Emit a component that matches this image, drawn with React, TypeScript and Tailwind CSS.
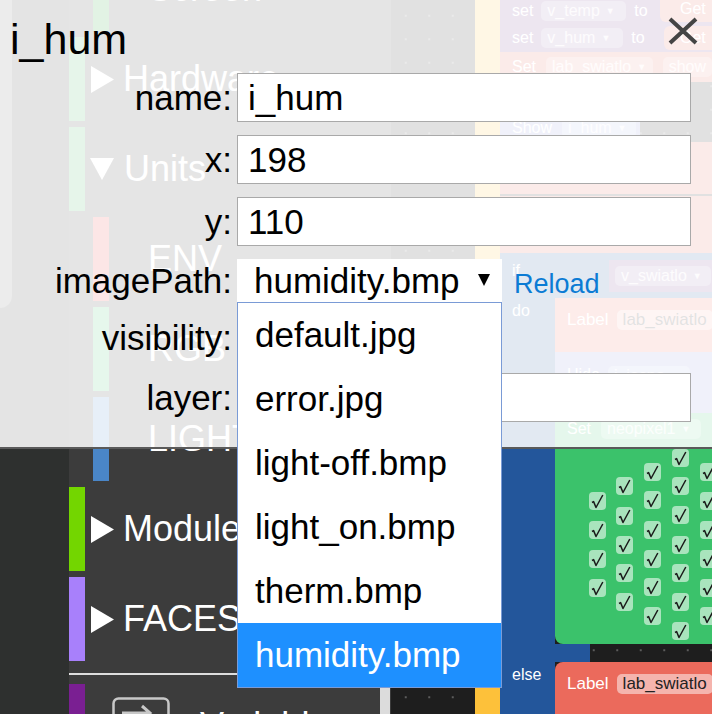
import React from "react";

type RowProps = { label: string; bar: string; dir?: "right" | "down" };

function TriRight() {
  return (
    <svg width="23" height="27" viewBox="0 0 23 27" className="shrink-0">
      <polygon points="0,0 23,13.5 0,27" fill="#ffffff" />
    </svg>
  );
}

function TriDown() {
  return (
    <svg width="24" height="22" viewBox="0 0 24 22" className="shrink-0">
      <polygon points="0,0 24,0 12,22" fill="#ffffff" />
    </svg>
  );
}

function MainRow({ label, bar, dir }: RowProps) {
  return (
    <div className="flex h-[84px] shrink-0 items-center">
      <div className={`h-full w-[16px] shrink-0 ${bar}`} />
      {dir === "down" ? (
        <div className="ml-[5px] flex items-center gap-[10px]">
          <TriDown />
          <span className="whitespace-nowrap text-[36px] leading-[40px] text-white">{label}</span>
        </div>
      ) : (
        <div className="ml-[6px] flex items-center gap-[9px]">
          <TriRight />
          <span className="whitespace-nowrap text-[36px] leading-[40px] text-white">{label}</span>
        </div>
      )}
    </div>
  );
}

function SubRow({ label, bar }: RowProps) {
  return (
    <div className="flex h-[84px] shrink-0 items-center">
      <div className={`ml-[24px] h-full w-[16px] shrink-0 ${bar}`} />
      <span className="ml-[39px] whitespace-nowrap text-[36px] leading-[40px] text-white">{label}</span>
    </div>
  );
}

function Toolbox() {
  return (
    <div className="relative flex h-full w-[322px] shrink-0 flex-col overflow-hidden bg-[#3c3c3c]">
      <div className="mt-[-53px] flex flex-col gap-[6px]">
        <SubRow label="Screen" bar="bg-[#1fa030]" />
        <MainRow label="Hardware" bar="bg-[#3eb15c]" dir="right" />
        <MainRow label="Units" bar="bg-[#3eb15c]" dir="down" />
        <SubRow label="ENV" bar="bg-[#e94040]" />
        <SubRow label="RGB" bar="bg-[#40bf6b]" />
        <SubRow label="LIGHT" bar="bg-[#4a86c8]" />
        <MainRow label="Modules" bar="bg-[#73d600]" dir="right" />
        <MainRow label="FACES" bar="bg-[#a880fb]" dir="right" />
      </div>
      <div className="mt-[12px] h-[2px] w-full shrink-0 bg-[#dedede]" />
      <div className="mt-[9px] flex h-[84px] shrink-0 items-center">
        <div className="h-full w-[16px] shrink-0 bg-[#7a1f92]" />
        <svg width="58" height="58" viewBox="0 0 58 58" className="ml-[27px] shrink-0">
          <rect x="1.5" y="1.5" width="55" height="55" rx="5" fill="none" stroke="#c8c8c8" strokeWidth="2.5" />
          <path d="M10 16 L38 16 M30 9 L38 16 L30 23" fill="none" stroke="#c8c8c8" strokeWidth="3" />
          <path d="M48 30 L20 30 M28 23 L20 30 L28 37" fill="none" stroke="#c8c8c8" strokeWidth="3" />
        </svg>
        <span className="ml-[30px] whitespace-nowrap text-[36px] leading-[40px] text-white">Variables</span>
      </div>
      <div className="absolute left-[311px] top-[688px] h-[30px] w-[10px] bg-[#dcdcdc]" />
    </div>
  );
}

function Pill({ text, arrow = true, className = "" }: { text: string; arrow?: boolean; className?: string }) {
  return (
    <div className={`flex h-[20px] items-center gap-[6px] rounded-[5px] bg-white/30 px-[6px] text-[16px] leading-[18px] text-white/80 ${className}`}>
      <span className="whitespace-nowrap">{text}</span>
      {arrow && <span className="text-[9px] leading-none">▼</span>}
    </div>
  );
}

const checks: [number, number][] = [
  [34, 79], [34, 108], [34, 137], [34, 166],
  [61, 64], [61, 94], [61, 123], [61, 151], [61, 180],
  [89, 50], [89, 78], [89, 108], [89, 137], [89, 165], [89, 194],
  [117, 36], [117, 64], [117, 93], [117, 123], [117, 151], [117, 180], [117, 209],
  [145, 50], [145, 79], [145, 108], [145, 137], [145, 166], [145, 194],
];

function Workspace() {
  return (
    <div className="relative h-full flex-1 overflow-hidden bg-[#1e1e1e] bg-[radial-gradient(circle,#5c5c5c_1px,transparent_1.5px)] bg-[length:23.5px_23.5px] bg-[position:3px_4px] text-[16px] leading-[18px] text-white">
      <div className="absolute left-[84px] top-0 h-[714px] w-[25px] bg-[#fdc13a]" />

      <div className="absolute left-[109px] top-[-8px] flex h-[32px] w-[212px] items-center gap-[8px] bg-[#74418f] pl-[12px] pt-[6px]">
        <span>set</span>
        <Pill text="v_temp" className="w-[85px]" />
        <span>to</span>
      </div>
      <div className="absolute left-[269px] top-[-5px] flex h-[27px] w-[60px] items-center rounded-l-[6px] bg-[#e0655a] pl-[20px]">Get</div>
      <div className="absolute left-[109px] top-[24px] flex h-[28px] w-[212px] items-center gap-[8px] bg-[#74418f] pl-[12px]">
        <span>set</span>
        <Pill text="v_hum" className="w-[82px]" />
        <span>to</span>
      </div>
      <div className="absolute left-[273px] top-[26px] flex h-[24px] w-[60px] items-center rounded-l-[6px] bg-[#e0655a] pl-[16px]">Get</div>

      <div className="absolute left-[109px] top-[52px] flex h-[30px] w-[212px] items-center gap-[10px] bg-[#e0655a] pl-[12px]">
        <span>Set</span>
        <Pill text="lab_swiatlo" className="w-[112px]" />
        <Pill text="show" arrow={false} />
      </div>
      <div className="absolute left-[109px] top-[82px] h-[36px] w-[145px] bg-[#e0655a]" />
      <div className="absolute left-[109px] top-[114px] flex h-[28px] w-[140px] items-center gap-[10px] bg-[#8a95d8] pl-[12px]">
        <span>Show</span>
        <Pill text="i_hum" className="w-[74px]" />
      </div>
      <div className="absolute left-[109px] top-[142px] flex h-[52px] w-[212px] items-center bg-[#e0655a] pl-[272px]">show</div>
      <div className="absolute left-[109px] top-[196px] flex h-[57px] w-[212px] items-center bg-[#e0655a] pl-[272px]">show</div>

      <div className="absolute left-[109px] top-[253px] h-[461px] w-[55px] bg-[#23569b]" />
      <div className="absolute left-[109px] top-[253px] h-[45px] w-[212px] bg-[#23569b]" />
      <div className="absolute left-[164px] top-[644px] h-[18px] w-[35px] bg-[#23569b]" />
      <span className="absolute left-[121px] top-[262px]">if</span>
      <span className="absolute left-[121px] top-[302px]">do</span>
      <span className="absolute left-[121px] top-[666px]">else</span>
      <div className="absolute left-[218px] top-[260px] flex h-[32px] w-[110px] items-center bg-[#74418f] pl-[6px]">
        <Pill text="v_swiatlo" className="w-[96px]" />
      </div>

      <div className="absolute left-[164px] top-[298px] flex h-[54px] w-[160px] items-start gap-[8px] bg-[#eb6a5c] pl-[12px] pt-[12px]">
        <span className="text-[17px] leading-[20px]">Label</span>
        <div className="flex h-[20px] items-center rounded-[5px] bg-[#f5b4ad] px-[6px] text-[17px] text-[#222]">lab_swiatlo</div>
      </div>
      <div className="absolute left-[164px] top-[352px] flex h-[61px] w-[160px] items-start gap-[8px] bg-[#8a95d8] pl-[12px] pt-[14px]">
        <span>Hide</span>
        <Pill text="i_jasno" className="w-[82px]" />
      </div>
      <div className="absolute left-[164px] top-[413px] h-[231px] w-[160px] rounded-bl-[8px] bg-[#3bc26b]">
        <div className="flex items-center gap-[10px] pl-[12px] pt-[6px]">
          <span>Set</span>
          <Pill text="neopixel1" className="w-[100px]" />
        </div>
        {checks.map(([x, y], i) => (
          <div
            key={i}
            className="absolute flex h-[18px] w-[17px] items-center justify-center rounded-[4px] bg-[#a9e4bd]"
            style={{ left: x, top: y }}
          >
            <svg width="13" height="15" viewBox="0 0 13 15">
              <path d="M1 8.5 L2.6 7.6 L5 13.5 L11.8 1" fill="none" stroke="#1a1a1a" strokeWidth="1.5" strokeLinejoin="round" />
            </svg>
          </div>
        ))}
      </div>
      <div className="absolute left-[164px] top-[662px] flex h-[60px] w-[160px] items-start gap-[8px] rounded-tl-[8px] bg-[#eb6a5c] pl-[12px] pt-[12px]">
        <span className="text-[17px] leading-[20px]">Label</span>
        <div className="flex h-[20px] items-center rounded-[5px] bg-[#f5b4ad] px-[6px] text-[17px] text-[#222]">lab_swiatlo</div>
      </div>
    </div>
  );
}

function Field({ label, children }: { label: string; children: React.ReactNode }) {
  return (
    <>
      <span className="justify-self-end whitespace-nowrap text-[35px] leading-[40px] text-black">{label}</span>
      {children}
    </>
  );
}

function TextInput({ value }: { value: string }) {
  return (
    <div className="flex h-[49px] w-[454px] items-center border border-[#a9a9a9] bg-white pl-[10px] text-[35px] leading-[40px] text-black">
      {value}
    </div>
  );
}

const options = ["default.jpg", "error.jpg", "light-off.bmp", "light_on.bmp", "therm.bmp", "humidity.bmp"];

function Dialog() {
  return (
    <div className="absolute left-0 top-0 h-[449px] w-[712px] border-b-2 border-[#5a5a5a] bg-white/[0.87] pt-[18px]">
      <div className="pl-[10px] text-[43px] leading-[43px] text-black">i_hum</div>
      <button className="absolute left-[668px] top-[17px]" aria-label="close">
        <svg width="30" height="28" viewBox="0 0 30 28">
          <path d="M2 2 L28 26 M28 2 L2 26" stroke="#444" strokeWidth="4" fill="none" />
        </svg>
      </button>
      <div className="mt-[12px] grid grid-cols-[232px_454px] items-center gap-x-[5px] gap-y-[13px]">
        <Field label="name:">
          <TextInput value="i_hum" />
        </Field>
        <Field label="x:">
          <TextInput value="198" />
        </Field>
        <Field label="y:">
          <TextInput value="110" />
        </Field>
        <Field label="imagePath:">
          <div className="flex h-[44px] items-center">
            <div className="relative flex h-[44px] w-[265px] items-center bg-white pl-[17px] text-[35px] leading-[40px] text-black">
              humidity.bmp
              <svg width="12" height="12" viewBox="0 0 12 12" className="absolute left-[241px] top-[15px]">
                <polygon points="0,0 12,0 6,12" fill="#000" />
              </svg>
              <div className="absolute left-0 top-[43px] z-10 w-[265px] border border-[#7a9bd6] bg-white">
                {options.map((o) => (
                  <div
                    key={o}
                    className={`flex h-[64px] items-center pl-[17px] text-[35px] leading-[40px] ${
                      o === "humidity.bmp" ? "bg-[#1e90ff] text-white" : "text-black"
                    }`}
                  >
                    {o}
                  </div>
                ))}
              </div>
            </div>
            <a className="ml-[12px] pt-[6px] text-[27px] leading-[30px] text-[#0b7bd4]">Reload</a>
          </div>
        </Field>
        <Field label="visibility:">
          <div className="h-[44px]" />
        </Field>
        <Field label="layer:">
          <TextInput value="" />
        </Field>
      </div>
    </div>
  );
}

export default function App() {
  return (
    <div className="relative flex h-[714px] w-[712px] overflow-hidden bg-[#1e1e1e] font-['Liberation_Sans',Arial,sans-serif]">
      <div className="h-full w-[69px] shrink-0 bg-[#2e302f]">
        <div className="h-[308px] w-[12px] rounded-br-[14px] bg-[#6b6b6b]" />
      </div>
      <Toolbox />
      <Workspace />
      <Dialog />
    </div>
  );
}
